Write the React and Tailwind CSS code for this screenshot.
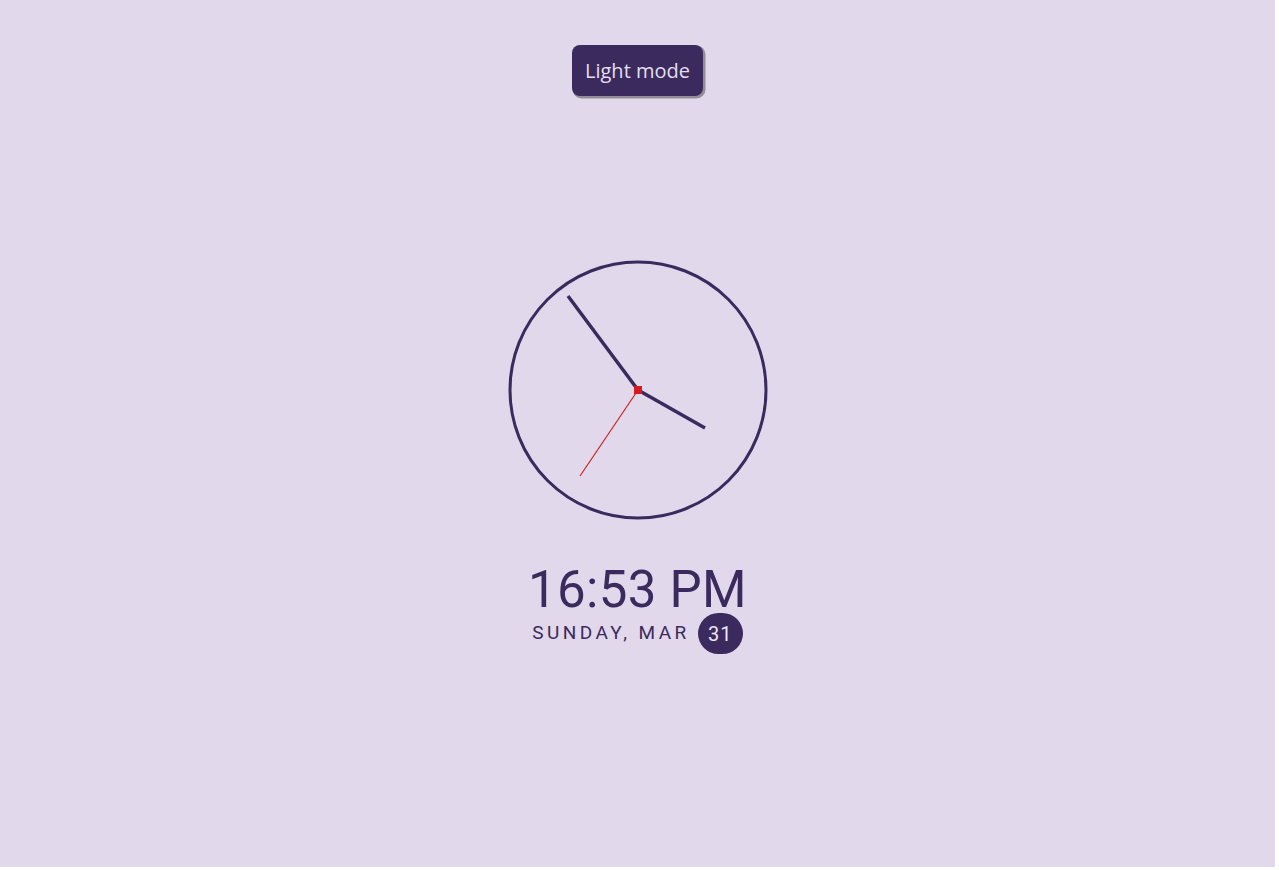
const INK = '#3b2a5e'

function AnalogClock() {
  return (
    <svg width="260" height="260" viewBox="0 0 260 260" className="block">
      <circle cx="130" cy="130" r="128" fill="none" stroke={INK} strokeWidth="3" />
      {/* minute */}
      <line x1="130" y1="130" x2="60" y2="36" stroke={INK} strokeWidth="3.5" />
      {/* hour */}
      <line x1="130" y1="130" x2="197" y2="168" stroke={INK} strokeWidth="3.5" />
      {/* second */}
      <line x1="130" y1="130" x2="72" y2="216" stroke="#d42020" strokeWidth="1.2" />
      <rect x="126" y="126" width="8" height="8" fill="#d41c1c" />
    </svg>
  )
}

export default function App() {
  return (
    <div className="w-[1275px] h-[867px] bg-[#e1d9eb] flex flex-col items-center font-['Roboto',sans-serif]">
      <button
        className="mt-[45px] h-[51px] px-[13px] rounded-[8px] bg-[#3b2a5e] text-[#e6def0] text-[20px]
                   font-['Open_Sans',sans-serif] shadow-[1.5px_1.5px_0_1px_rgba(0,0,0,0.35)]"
      >
        Light mode
      </button>

      <div className="mt-[164px]">
        <AnalogClock />
      </div>

      <div className="mt-[42px] flex flex-col items-center text-[#3b2a5e]">
        <p className="text-[51px] leading-[56px] tracking-[0.3px]">16:53 PM</p>
        <div className="flex items-center gap-[8px] -mt-[5px]">
          <span className="text-[19px] tracking-[0.18em] uppercase">Sunday, Mar</span>
          <span className="w-[45px] h-[41px] rounded-full bg-[#3b2a5e] text-[#ece6f3] text-[20px]
                           tracking-[1px] flex items-center justify-center">
            31
          </span>
        </div>
      </div>
    </div>
  )
}
